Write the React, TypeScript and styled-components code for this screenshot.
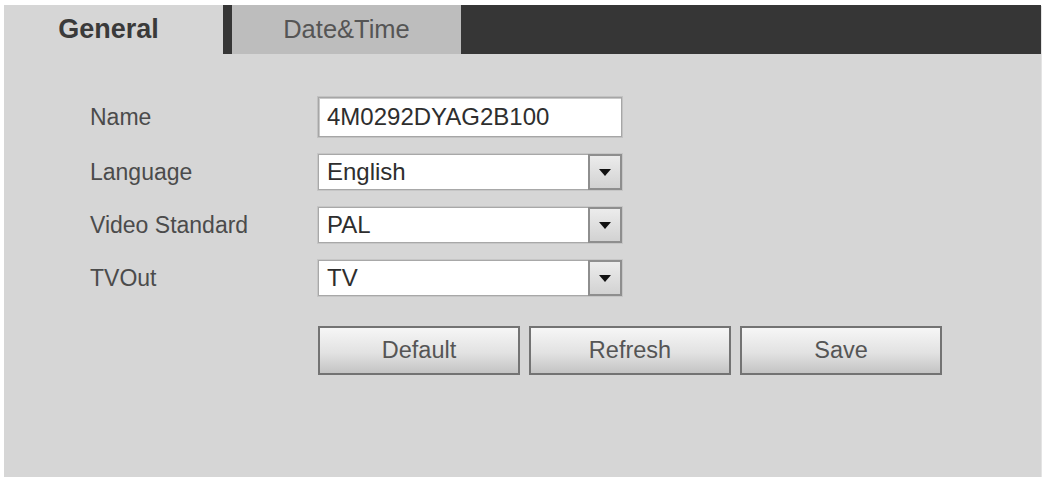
import React from 'react';
import styled, { createGlobalStyle } from 'styled-components';

const GlobalStyle = createGlobalStyle`
  html, body {
    margin: 0;
    padding: 0;
    background: #ffffff;
  }
  body {
    font-family: "Liberation Sans", Arial, sans-serif;
  }
`;

type Field = {
  readonly label: string;
  readonly kind: 'text' | 'select';
  readonly value: string;
};

const fields: Field[] = [
  { label: 'Name', kind: 'text', value: '4M0292DYAG2B100' },
  { label: 'Language', kind: 'select', value: 'English' },
  { label: 'Video Standard', kind: 'select', value: 'PAL' },
  { label: 'TVOut', kind: 'select', value: 'TV' },
];

const actions = ['Default', 'Refresh', 'Save'];

export default function App() {
  return (
    <>
      <GlobalStyle />
      <PanelStyled>
        <TabBarStyled>
          <TabStyled $active>General</TabStyled>
          <TabStyled>Date&amp;Time</TabStyled>
        </TabBarStyled>
        <FormStyled>
          {fields.map(f => (
            <React.Fragment key={f.label}>
              <LabelStyled>{f.label}</LabelStyled>
              {f.kind === 'text' ? (
                <TextInputStyled defaultValue={f.value} spellCheck={false} />
              ) : (
                <Select value={f.value} />
              )}
            </React.Fragment>
          ))}
          <ButtonRowStyled>
            {actions.map(a => (
              <ButtonStyled key={a} type="button">{a}</ButtonStyled>
            ))}
          </ButtonRowStyled>
        </FormStyled>
      </PanelStyled>
    </>
  );
}

const Select: React.FC<{ readonly value: string }> = ({ value }) => (
  <SelectStyled role="combobox">
    <SelectValueStyled>{value}</SelectValueStyled>
    <ArrowBoxStyled>
      <svg width="12" height="7" viewBox="0 0 12 7">
        <path d="M0 0 H12 L6 7 Z" fill="#111" />
      </svg>
    </ArrowBoxStyled>
  </SelectStyled>
);

const PanelStyled = styled.div`
  margin: 5px 0 0 4px;
  width: 1037px;
  height: 472px;
  background: #d6d6d6;
  box-shadow: 1px 1px 0 #e4e4e4;
  display: flex;
  flex-direction: column;
`;

const TabBarStyled = styled.div`
  height: 49px;
  display: flex;
  gap: 9px;
  background: #363636;
`;

const TabStyled = styled.div<{ $active?: boolean }>`
  width: ${p => (p.$active ? '219px' : '229px')};
  display: flex;
  align-items: center;
  justify-content: center;
  padding-right: ${p => (p.$active ? '10px' : '0')};
  box-sizing: border-box;
  background: ${p => (p.$active ? '#d6d6d6' : '#bdbdbd')};
  color: ${p => (p.$active ? '#3a3a3a' : '#555555')};
  font-size: ${p => (p.$active ? '27px' : '25.5px')};
  font-weight: ${p => (p.$active ? 700 : 400)};
`;

const FormStyled = styled.div`
  display: grid;
  grid-template-columns: 228px 304px;
  row-gap: 17px;
  align-items: center;
  padding: 43px 0 0 86px;
`;

const LabelStyled = styled.div`
  font-size: 23px;
  color: #4b4b4b;
`;

const TextInputStyled = styled.input`
  box-sizing: border-box;
  width: 304px;
  height: 40px;
  margin: 0;
  padding: 0 8px;
  border: 1px solid #a6a6a6;
  box-shadow: inset 1px 1px 0 #c9c9c9, 0 0 0 1px #c2c2c2;
  background: #ffffff;
  font-family: inherit;
  font-size: 24px;
  color: #2e2e2e;
  outline: none;
`;

const SelectStyled = styled.div`
  box-sizing: border-box;
  width: 304px;
  height: 36px;
  display: flex;
  align-items: stretch;
  background: #ffffff;
  border: 1px solid #a8a8a8;
  box-shadow: 0 0 0 1px #c6c6c6;
`;

const SelectValueStyled = styled.span`
  flex: 1;
  display: flex;
  align-items: center;
  padding-left: 8px;
  font-size: 24px;
  color: #2e2e2e;
`;

const ArrowBoxStyled = styled.span`
  box-sizing: border-box;
  width: 34px;
  margin: -1px -1px -1px 0;
  display: flex;
  align-items: center;
  justify-content: center;
  border: 2px solid #8e8e8e;
  background: linear-gradient(#ececec, #d2d2d2);
`;

const ButtonRowStyled = styled.div`
  grid-column: 2;
  display: flex;
  gap: 9px;
  margin-top: 13px;
`;

const ButtonStyled = styled.button`
  flex: none;
  width: 202px;
  height: 49px;
  margin: 0;
  padding: 0;
  border: 2px solid #737373;
  background: linear-gradient(#f6f6f6, #e2e2e2 55%, #c4c4c4);
  font-family: inherit;
  font-size: 23.5px;
  color: #555555;
  cursor: pointer;
`;
